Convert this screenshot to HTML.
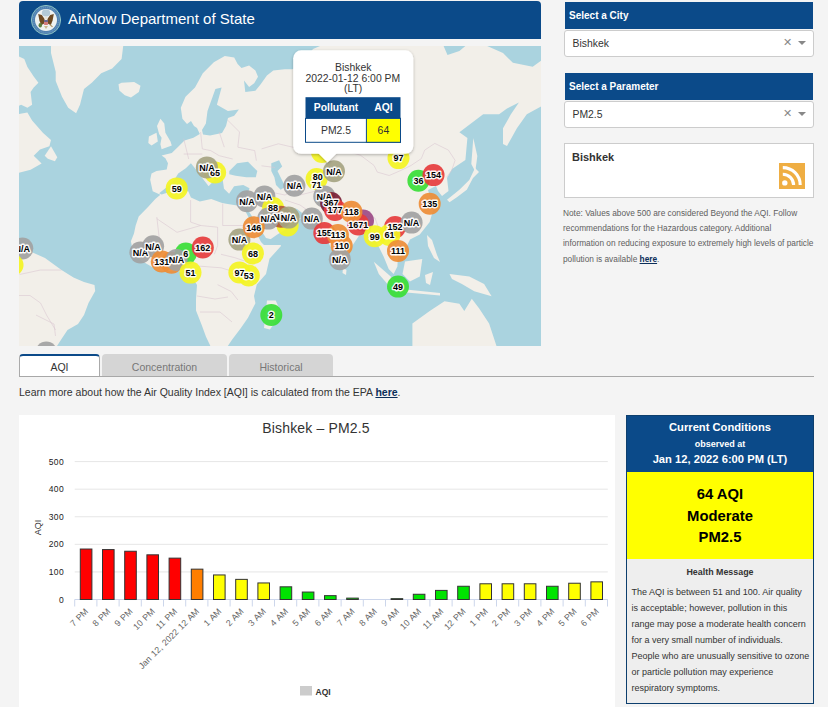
<!DOCTYPE html>
<html><head><meta charset="utf-8">
<style>
*{box-sizing:border-box;margin:0;padding:0}
html,body{width:828px;height:707px;overflow:hidden;background:#f4f4f4;font-family:"Liberation Sans",sans-serif;color:#333}
.abs{position:absolute}
#hdr{left:19px;top:1px;width:522px;height:38px;background:#0b4a89;border-radius:4px 4px 0 0}
#hdr .t{left:49px;top:9px;font-size:15px;color:#fff;white-space:nowrap}
#map{left:19px;top:46px;width:522px;height:300px;overflow:hidden;background:#aad3df}
.sh{left:565px;width:248px;height:27px;background:#0b4a89;color:#fff;font-weight:bold;font-size:10px;padding:8px 0 0 4px;white-space:nowrap}
.sel{left:564px;width:250px;height:27px;background:#fff;border:1px solid #ccc;border-radius:3px;font-size:10.4px;padding:7px 0 0 7.5px;color:#333}
.sel .x{position:absolute;left:218px;top:5px;font-size:11px;color:#888}
.sel .ar{position:absolute;left:233px;top:10px;width:0;height:0;border-left:4px solid transparent;border-right:4px solid transparent;border-top:4px solid #888}
#bx{left:564px;top:143px;width:250px;height:55px;background:#fff;border:1px solid #ccc}
#note{left:563px;top:205.5px;width:260px;font-size:8.3px;line-height:15.4px;color:#606060;white-space:nowrap}
.tab{top:354px;height:22px;border-radius:4px 4px 0 0;font-size:10.5px;text-align:center;padding-top:5px}
#chart{left:19px;top:415px;width:596px;height:292px;background:#fff}
#cc{left:626px;top:415px;width:188px;height:289px;background:#eeeeee}
</style></head><body>
<div id="hdr" class="abs">
  <svg class="abs" style="left:11px;top:3px" width="32" height="32" viewBox="0 0 32 32">
    <circle cx="16" cy="16" r="14.6" fill="#4d7fae" stroke="#8cc2c4" stroke-width="1"/>
    <circle cx="16" cy="16" r="12.6" fill="none" stroke="#6391be" stroke-width="1.6" stroke-dasharray="1.2 0.8"/>
    <circle cx="16" cy="16" r="11" fill="#eef2f1"/>
    <ellipse cx="16" cy="9" rx="4.2" ry="3.4" fill="#b3cad6"/>
    <path d="M8.2 10 L11.8 11 L14.6 15 L14.2 19.5 L11.2 21.2 L9.4 16.5Z" fill="#6e4a22"/>
    <path d="M23.8 10 L20.2 11 L17.4 15 L17.8 19.5 L20.8 21.2 L22.6 16.5Z" fill="#6e4a22"/>
    <circle cx="16" cy="14" r="1.6" fill="#e8e4d6"/>
    <rect x="14.1" y="16.2" width="3.8" height="4.8" rx="0.6" fill="#d4797a"/>
    <rect x="14.1" y="16.2" width="3.8" height="1.6" fill="#4d5f93"/>
    <ellipse cx="10.3" cy="21.2" rx="1.7" ry="2.3" fill="#5b8040"/>
    <path d="M20 20 L23 22.5 L22 23.2 L19.5 21Z" fill="#b49a6a"/>
    <path d="M14 22 L16 25 L18 22Z" fill="#cbb88e"/>
  </svg>
  <div class="abs t">AirNow Department of State</div>
</div>
<div id="map" class="abs">
<svg width="522" height="300" viewBox="19 46 522 300" style="position:absolute;left:0;top:0">
<rect x="19" y="46" width="522" height="300" fill="#aad3df"/>
<polygon points="18.0,56.0 24.3,59.1 27.4,67.0 33.7,76.4 38.4,82.7 33.7,87.4 30.6,92.1 32.1,104.7 27.4,107.8 21.1,104.7 18.0,106.2" fill="#f2efe9"/>
<polygon points="18.0,114.1 27.4,112.5 32.1,120.4 43.1,132.9 51.0,140.0 49.4,146.3 40.0,149.4 33.7,155.7 41.6,163.6 30.6,169.8 18.0,173.0" fill="#f2efe9"/>
<polygon points="44.7,155.7 51.0,146.3 57.3,157.3 54.9,161.2 47.8,158.8" fill="#f2efe9"/>
<polygon points="51.0,46.0 123.2,46.0 121.6,59.1 112.2,68.6 101.2,73.3 91.8,82.7 84.0,89.0 80.0,104.7 76.1,113.3 68.2,107.8 62.0,96.8 55.7,81.1 55.7,71.7 53.3,62.3 51.0,52.9" fill="#f2efe9"/>
<polygon points="118.5,84.3 121.6,82.7 134.2,81.9 140.5,85.8 138.9,92.1 131.0,97.6 124.8,95.2 119.3,90.5" fill="#f2efe9"/>
<polygon points="199.8,134.0 197.0,128.0 194.0,126.0 191.0,121.0 187.0,124.0 182.4,118.8 180.8,107.8 185.5,96.8 195.0,87.4 202.8,73.3 213.8,62.3 224.8,56.0 234.2,57.6 237.6,64.1 241.5,67.9 249.1,65.4 255.4,70.4 258.0,76.8 254.2,83.2 249.1,87.0 244.0,80.6 245.3,92.1 255.4,90.8 260.5,84.4 266.9,75.5 273.3,70.4 284.7,69.2 292.3,69.2 300.0,66.0 313.0,49.0 320.0,46.0 443.6,46.0 447.5,54.9 459.4,50.9 465.4,46.0 487.2,46.0 503.0,52.9 512.9,62.8 522.8,64.8 532.7,66.8 541.0,60.8 541.0,106.4 526.8,114.3 516.9,128.2 507.0,146.0 503.0,144.0 503.0,128.2 510.9,114.3 518.9,102.4 507.0,108.4 499.1,114.3 483.2,114.3 459.4,132.2 467.4,138.1 465.4,159.9 452.0,169.0 447.0,178.0 448.5,191.0 442.0,196.0 438.0,191.0 436.0,186.0 428.0,190.0 431.0,200.0 434.0,207.0 429.7,222.0 419.8,234.4 410.0,239.4 405.0,250.0 398.0,255.0 397.4,266.6 393.6,274.0 388.7,269.1 383.7,256.7 376.3,241.8 371.4,231.9 368.9,224.5 361.5,231.9 351.6,246.8 344.1,261.7 340.4,267.8 336.7,259.2 329.3,244.3 319.4,222.0 312.0,217.1 307.0,212.1 299.6,219.6 289.7,227.0 277.3,234.4 268.0,241.0 280.0,243.0 281.0,246.0 269.5,258.8 266.0,274.0 256.8,284.5 254.0,296.0 255.4,303.3 248.0,317.8 240.9,328.0 232.2,339.6 227.8,346.0 210.4,346.0 206.0,336.7 201.7,325.0 196.0,310.6 196.0,299.0 197.0,285.0 194.0,280.0 186.9,276.0 179.1,270.9 158.9,270.9 140.2,260.0 132.4,249.1 130.9,241.3 134.0,233.5 135.6,225.8 138.7,216.4 148.0,207.1 155.3,198.9 160.4,194.7 152.7,191.2 150.2,179.8 151.5,173.4 156.5,170.9 166.7,169.6 168.0,163.3 165.4,158.2 161.6,155.6 171.8,153.1 178.2,146.7 184.5,140.4 193.4,137.8" fill="#f2efe9"/>
<polygon points="160.4,118.8 164.3,123.5 165.4,132.7 170.5,141.6 171.8,145.4 161.6,149.3 160.4,144.2 161.6,137.8 159.1,134.0 157.0,126.0" fill="#f2efe9"/>
<polygon points="148.9,136.5 156.5,132.7 157.8,141.6 151.5,145.4 148.3,142.9" fill="#f2efe9"/>
<polygon points="201.1,191.2 208.7,191.2 206.2,196.3" fill="#f2efe9"/>
<polygon points="447.0,199.7 459.4,189.8 469.3,180.0 475.0,168.0 479.0,172.0 473.0,178.0 466.8,189.8 456.9,197.3 449.5,202.2" fill="#f2efe9"/>
<polygon points="473.3,138.1 477.3,155.9 475.3,171.8 471.3,163.9" fill="#f2efe9"/>
<polygon points="405.0,261.6 422.3,259.1 419.8,276.5 409.9,281.4 402.5,274.0" fill="#f2efe9"/>
<polygon points="373.8,261.7 393.6,279.0 401.1,291.3 393.6,291.3 378.8,274.0" fill="#f2efe9"/>
<polygon points="401.0,289.0 440.0,293.0 440.0,295.5 401.0,292.0" fill="#f2efe9"/>
<polygon points="449.5,274.0 469.3,276.5 484.1,283.9 491.6,296.3 474.2,291.3 461.9,283.9 452.0,278.9" fill="#f2efe9"/>
<polygon points="427.0,235.0 432.0,240.0 437.0,255.0 440.0,262.0 434.0,258.0 428.0,246.0" fill="#f2efe9"/>
<polygon points="425.0,275.0 433.0,272.0 430.0,285.0 426.0,283.0" fill="#f2efe9"/>
<polygon points="412.4,323.5 429.7,311.1 444.5,301.2 459.4,303.7 464.3,311.1 471.8,298.7 479.2,308.6 489.1,323.5 496.5,346.0 412.4,346.0" fill="#f2efe9"/>
<polygon points="267.0,300.4 275.7,300.4 281.4,313.5 269.9,329.4 264.0,328.0" fill="#f2efe9"/>
<polygon points="343.0,268.0 346.5,270.0 346.0,275.0 342.5,273.0" fill="#f2efe9"/>
<polygon points="18.0,244.0 31.5,252.0 45.0,258.0 61.5,270.0 73.5,277.5 84.0,282.0 94.5,285.0 95.2,291.0 88.5,303.0 84.0,315.0 78.0,324.0 67.5,330.0 61.5,339.0 57.0,346.0 18.0,346.0" fill="#f2efe9"/>
<polygon points="207.5,111.0 215.4,89.0 221.6,87.4 216.9,104.7 227.9,111.0 238.9,109.4 234.2,115.7 228.0,118.0 226.0,126.0 222.0,133.0 210.0,135.5 203.0,134.5 202.0,130.0 205.9,123.5" fill="#aad3df"/>
<polygon points="159.1,193.2 168.0,186.2 174.4,179.8 178.2,173.4 185.8,168.3 190.9,163.3 196.0,169.6 203.6,179.8 208.7,186.2 206.2,188.7 211.2,183.6 215.1,179.8 208.7,173.4 201.1,165.8 199.8,160.7 206.2,163.3 216.3,170.9 222.7,179.8 224.0,188.7 229.1,193.8 234.1,186.2 243.3,185.1 249.5,188.2 246.4,199.1 243.3,206.9 235.6,205.3 226.2,203.8 221.4,202.7 211.2,198.9 199.8,201.4 190.9,197.6 188.3,191.2 168.0,192.5 161.6,194.4" fill="#aad3df"/>
<polygon points="229.3,171.1 237.1,163.3 248.0,161.8 252.7,166.4 257.3,171.1 255.8,177.3 246.4,177.3 235.6,175.8 229.3,174.2" fill="#aad3df"/>
<polygon points="271.3,163.3 279.1,160.2 282.2,166.4 277.5,171.1 282.2,180.4 285.3,186.7 280.7,189.8 276.0,185.1 274.4,177.3 271.3,171.1" fill="#aad3df"/>
<polygon points="289.0,207.0 297.0,209.0 306.0,216.0 300.0,218.0 292.0,213.0" fill="#aad3df"/>
<polygon points="243.3,206.9 246.0,207.0 266.0,238.0 282.0,242.0 281.0,245.0 264.0,245.0 261.0,242.0" fill="#aad3df"/>
<polyline points="183.7,138.7 188.7,159.0" fill="none" stroke="#d9c4d0" stroke-width="0.55"/>
<polyline points="200.6,132.0 202.3,148.9" fill="none" stroke="#d9c4d0" stroke-width="0.55"/>
<polyline points="219.2,132.0 224.3,147.2" fill="none" stroke="#d9c4d0" stroke-width="0.55"/>
<polyline points="227.6,120.1 239.5,132.0 237.8,147.2 254.7,150.6 256.4,160.7" fill="none" stroke="#d9c4d0" stroke-width="0.55"/>
<polyline points="202.3,148.9 210.7,150.6 219.2,155.7 232.7,159.0" fill="none" stroke="#d9c4d0" stroke-width="0.55"/>
<polyline points="183.7,154.0 202.3,154.0" fill="none" stroke="#d9c4d0" stroke-width="0.55"/>
<polyline points="261.5,148.9 278.4,143.8 300.0,148.9 330.0,146.0 360.4,155.2" fill="none" stroke="#d9c4d0" stroke-width="0.55"/>
<polyline points="261.5,165.8 275.0,167.5" fill="none" stroke="#d9c4d0" stroke-width="0.55"/>
<polyline points="190.6,200.1 190.6,222.1 200.7,225.5" fill="none" stroke="#d9c4d0" stroke-width="0.55"/>
<polyline points="222.7,203.5 222.7,225.5 244.7,225.5" fill="none" stroke="#d9c4d0" stroke-width="0.55"/>
<polyline points="217.6,227.2 217.6,245.8 214.3,254.3" fill="none" stroke="#d9c4d0" stroke-width="0.55"/>
<polyline points="156.8,218.7 177.0,232.3 200.7,225.5 217.6,227.2" fill="none" stroke="#d9c4d0" stroke-width="0.55"/>
<polyline points="156.8,217.0 160.1,245.8" fill="none" stroke="#d9c4d0" stroke-width="0.55"/>
<polyline points="221.0,254.3 234.5,257.6 244.7,261.0" fill="none" stroke="#d9c4d0" stroke-width="0.55"/>
<polyline points="199.0,266.1 221.0,267.8 237.9,272.9" fill="none" stroke="#d9c4d0" stroke-width="0.55"/>
<polyline points="217.6,284.7 231.2,291.5 237.9,300.0" fill="none" stroke="#d9c4d0" stroke-width="0.55"/>
<polyline points="197.0,296.0 215.0,299.0 228.0,297.0" fill="none" stroke="#d9c4d0" stroke-width="0.55"/>
<polyline points="200.0,312.0 220.0,312.0 232.0,322.0" fill="none" stroke="#d9c4d0" stroke-width="0.55"/>
<polyline points="360.4,155.2 374.0,165.4 377.3,172.1 389.2,175.5 401.0,170.4 411.2,165.4 421.3,158.6 424.7,150.1 434.8,143.4 448.4,150.1 455.1,160.3 451.7,170.4 446.7,177.2" fill="none" stroke="#d9c4d0" stroke-width="0.55"/>
<polyline points="300.0,195.0 320.0,190.0 340.0,200.0 360.0,215.0 375.0,218.0" fill="none" stroke="#d9c4d0" stroke-width="0.55"/>
<polyline points="285.0,200.0 300.0,205.0 310.0,212.0" fill="none" stroke="#d9c4d0" stroke-width="0.55"/>
<polyline points="375.0,218.0 380.0,232.0 395.0,240.0" fill="none" stroke="#d9c4d0" stroke-width="0.55"/>
<polyline points="250.0,225.0 265.0,222.0 282.0,226.0" fill="none" stroke="#d9c4d0" stroke-width="0.55"/>
<polyline points="270.0,192.0 285.0,195.0 295.0,190.0" fill="none" stroke="#d9c4d0" stroke-width="0.55"/>
<polyline points="18.0,295.5 30.0,295.5 40.5,303.0 46.5,315.0 55.5,330.0" fill="none" stroke="#d9c4d0" stroke-width="0.55"/>
<polyline points="19.5,274.5 40.5,270.0 61.5,270.0" fill="none" stroke="#d9c4d0" stroke-width="0.55"/>
<polyline points="36.0,315.0 54.0,324.0 55.5,336.0" fill="none" stroke="#d9c4d0" stroke-width="0.55"/>
<g font-family="Liberation Sans" font-weight="bold" font-size="9" text-anchor="middle" stroke-linejoin="round">
<circle cx="22.3" cy="248.5" r="11" fill="#a2a2a2" fill-opacity="0.92"/>
<circle cx="12.5" cy="265" r="11" fill="#f4f422" fill-opacity="0.92"/>
<circle cx="46.3" cy="352.5" r="11" fill="#a2a2a2" fill-opacity="0.92"/>
<circle cx="176.7" cy="188.4" r="11" fill="#f4f422" fill-opacity="0.92"/>
<circle cx="215.1" cy="172.5" r="11" fill="#f4f422" fill-opacity="0.92"/>
<circle cx="206.9" cy="167.4" r="11" fill="#a6a482" fill-opacity="0.92"/>
<circle cx="140.4" cy="252.5" r="11" fill="#a2a2a2" fill-opacity="0.92"/>
<circle cx="153.1" cy="246.3" r="11" fill="#a2a2a2" fill-opacity="0.92"/>
<circle cx="171.5" cy="262.8" r="11" fill="#ee8d36" fill-opacity="0.92"/>
<circle cx="161.8" cy="261.4" r="11" fill="#ee8d36" fill-opacity="0.92"/>
<circle cx="185.8" cy="253.6" r="11" fill="#3ade36" fill-opacity="0.92"/>
<circle cx="176.6" cy="259.9" r="11" fill="#a2a2a2" fill-opacity="0.92"/>
<circle cx="202.8" cy="247.5" r="11" fill="#e63c3c" fill-opacity="0.92"/>
<circle cx="190.5" cy="272.6" r="11" fill="#f4f422" fill-opacity="0.92"/>
<circle cx="239.4" cy="239.6" r="11" fill="#a6a482" fill-opacity="0.92"/>
<circle cx="252.9" cy="253.4" r="11" fill="#f4f422" fill-opacity="0.92"/>
<circle cx="239.4" cy="272.4" r="11" fill="#f4f422" fill-opacity="0.92"/>
<circle cx="248.8" cy="275.5" r="11" fill="#f4f422" fill-opacity="0.92"/>
<circle cx="271.3" cy="315" r="11" fill="#3ade36" fill-opacity="0.92"/>
<circle cx="247" cy="201.2" r="11" fill="#a2a2a2" fill-opacity="0.92"/>
<circle cx="264.4" cy="196.4" r="11" fill="#a2a2a2" fill-opacity="0.92"/>
<circle cx="273.1" cy="208" r="11" fill="#f4f422" fill-opacity="0.92"/>
<circle cx="287.6" cy="225.4" r="11" fill="#f4f422" fill-opacity="0.92"/>
<circle cx="280.9" cy="216.7" r="11" fill="#b0583e" fill-opacity="0.92"/>
<circle cx="268.3" cy="218.6" r="11" fill="#a2a2a2" fill-opacity="0.92"/>
<circle cx="288.6" cy="217.6" r="11" fill="#a6a482" fill-opacity="0.92"/>
<circle cx="253.8" cy="227.3" r="11" fill="#ee8d36" fill-opacity="0.92"/>
<circle cx="294.4" cy="185.7" r="11" fill="#a2a2a2" fill-opacity="0.92"/>
<circle cx="322" cy="152" r="11" fill="#f4f422" fill-opacity="0.92"/>
<circle cx="316.6" cy="179.1" r="11" fill="#f4f422" fill-opacity="0.92"/>
<circle cx="334" cy="171.3" r="11" fill="#a6a482" fill-opacity="0.92"/>
<circle cx="324.3" cy="196.4" r="11" fill="#a2a2a2" fill-opacity="0.92"/>
<circle cx="331.1" cy="203.1" r="11" fill="#7a2036" fill-opacity="0.92"/>
<circle cx="335" cy="209.9" r="11" fill="#e63c3c" fill-opacity="0.92"/>
<circle cx="311.8" cy="218.6" r="11" fill="#a2a2a2" fill-opacity="0.92"/>
<circle cx="363" cy="220.5" r="11" fill="#9c4a86" fill-opacity="0.92"/>
<circle cx="358.2" cy="224.4" r="11" fill="#e63c3c" fill-opacity="0.92"/>
<circle cx="351.4" cy="211.8" r="11" fill="#ee8d36" fill-opacity="0.92"/>
<circle cx="324.3" cy="233.1" r="11" fill="#e63c3c" fill-opacity="0.92"/>
<circle cx="337.9" cy="235" r="11" fill="#ee8d36" fill-opacity="0.92"/>
<circle cx="341.7" cy="245.7" r="11" fill="#ee8d36" fill-opacity="0.92"/>
<circle cx="339.8" cy="259.2" r="11" fill="#a2a2a2" fill-opacity="0.92"/>
<circle cx="398.5" cy="158.1" r="11" fill="#f4f422" fill-opacity="0.92"/>
<circle cx="418.4" cy="180.7" r="11" fill="#3ade36" fill-opacity="0.92"/>
<circle cx="433.5" cy="175.1" r="11" fill="#e63c3c" fill-opacity="0.92"/>
<circle cx="429.7" cy="203.8" r="11" fill="#ee8d36" fill-opacity="0.92"/>
<circle cx="395.1" cy="227.1" r="11" fill="#e63c3c" fill-opacity="0.92"/>
<circle cx="411.6" cy="222.6" r="11" fill="#a2a2a2" fill-opacity="0.92"/>
<circle cx="374.7" cy="236.2" r="11" fill="#f4f422" fill-opacity="0.92"/>
<circle cx="389.4" cy="235" r="11" fill="#f4f422" fill-opacity="0.92"/>
<circle cx="398" cy="250.9" r="11" fill="#ee8d36" fill-opacity="0.92"/>
<circle cx="398" cy="286.6" r="11" fill="#3ade36" fill-opacity="0.92"/>
<text x="22.3" y="251.8" stroke="#fff" stroke-opacity="0.95" stroke-width="2.8" fill="#000" paint-order="stroke">N/A</text>
<text x="176.7" y="191.7" stroke="#fff" stroke-opacity="0.95" stroke-width="2.8" fill="#000" paint-order="stroke">59</text>
<text x="215.1" y="175.8" stroke="#fff" stroke-opacity="0.95" stroke-width="2.8" fill="#000" paint-order="stroke">65</text>
<text x="206.9" y="170.7" stroke="#fff" stroke-opacity="0.95" stroke-width="2.8" fill="#000" paint-order="stroke">N/A</text>
<text x="140.4" y="255.8" stroke="#fff" stroke-opacity="0.95" stroke-width="2.8" fill="#000" paint-order="stroke">N/A</text>
<text x="153.1" y="249.6" stroke="#fff" stroke-opacity="0.95" stroke-width="2.8" fill="#000" paint-order="stroke">N/A</text>
<text x="161.8" y="264.7" stroke="#fff" stroke-opacity="0.95" stroke-width="2.8" fill="#000" paint-order="stroke">131</text>
<text x="185.8" y="256.9" stroke="#fff" stroke-opacity="0.95" stroke-width="2.8" fill="#000" paint-order="stroke">6</text>
<text x="176.6" y="263.2" stroke="#fff" stroke-opacity="0.95" stroke-width="2.8" fill="#000" paint-order="stroke">N/A</text>
<text x="202.8" y="250.8" stroke="#fff" stroke-opacity="0.95" stroke-width="2.8" fill="#000" paint-order="stroke">162</text>
<text x="190.5" y="275.9" stroke="#fff" stroke-opacity="0.95" stroke-width="2.8" fill="#000" paint-order="stroke">51</text>
<text x="239.4" y="242.9" stroke="#fff" stroke-opacity="0.95" stroke-width="2.8" fill="#000" paint-order="stroke">N/A</text>
<text x="252.9" y="256.7" stroke="#fff" stroke-opacity="0.95" stroke-width="2.8" fill="#000" paint-order="stroke">68</text>
<text x="239.4" y="275.7" stroke="#fff" stroke-opacity="0.95" stroke-width="2.8" fill="#000" paint-order="stroke">97</text>
<text x="248.8" y="278.8" stroke="#fff" stroke-opacity="0.95" stroke-width="2.8" fill="#000" paint-order="stroke">53</text>
<text x="271.3" y="318.3" stroke="#fff" stroke-opacity="0.95" stroke-width="2.8" fill="#000" paint-order="stroke">2</text>
<text x="247" y="204.5" stroke="#fff" stroke-opacity="0.95" stroke-width="2.8" fill="#000" paint-order="stroke">N/A</text>
<text x="264.4" y="199.7" stroke="#fff" stroke-opacity="0.95" stroke-width="2.8" fill="#000" paint-order="stroke">N/A</text>
<text x="273.1" y="211.3" stroke="#fff" stroke-opacity="0.95" stroke-width="2.8" fill="#000" paint-order="stroke">88</text>
<text x="280.9" y="220.0" stroke="#fff" stroke-opacity="0.95" stroke-width="2.8" fill="#000" paint-order="stroke">N/A</text>
<text x="268.3" y="221.9" stroke="#fff" stroke-opacity="0.95" stroke-width="2.8" fill="#000" paint-order="stroke">N/A</text>
<text x="288.6" y="220.9" stroke="#fff" stroke-opacity="0.95" stroke-width="2.8" fill="#000" paint-order="stroke">N/A</text>
<text x="253.8" y="230.6" stroke="#fff" stroke-opacity="0.95" stroke-width="2.8" fill="#000" paint-order="stroke">146</text>
<text x="294.4" y="189.0" stroke="#fff" stroke-opacity="0.95" stroke-width="2.8" fill="#000" paint-order="stroke">N/A</text>
<text x="334" y="174.6" stroke="#fff" stroke-opacity="0.95" stroke-width="2.8" fill="#000" paint-order="stroke">N/A</text>
<text x="324.3" y="199.7" stroke="#fff" stroke-opacity="0.95" stroke-width="2.8" fill="#000" paint-order="stroke">N/A</text>
<text x="331.1" y="206.4" stroke="#fff" stroke-opacity="0.95" stroke-width="2.8" fill="#000" paint-order="stroke">367</text>
<text x="335" y="213.2" stroke="#fff" stroke-opacity="0.95" stroke-width="2.8" fill="#000" paint-order="stroke">177</text>
<text x="311.8" y="221.9" stroke="#fff" stroke-opacity="0.95" stroke-width="2.8" fill="#000" paint-order="stroke">N/A</text>
<text x="358.2" y="227.7" stroke="#fff" stroke-opacity="0.95" stroke-width="2.8" fill="#000" paint-order="stroke">1671</text>
<text x="351.4" y="215.1" stroke="#fff" stroke-opacity="0.95" stroke-width="2.8" fill="#000" paint-order="stroke">118</text>
<text x="324.3" y="236.4" stroke="#fff" stroke-opacity="0.95" stroke-width="2.8" fill="#000" paint-order="stroke">155</text>
<text x="337.9" y="238.3" stroke="#fff" stroke-opacity="0.95" stroke-width="2.8" fill="#000" paint-order="stroke">113</text>
<text x="341.7" y="249.0" stroke="#fff" stroke-opacity="0.95" stroke-width="2.8" fill="#000" paint-order="stroke">110</text>
<text x="339.8" y="262.5" stroke="#fff" stroke-opacity="0.95" stroke-width="2.8" fill="#000" paint-order="stroke">N/A</text>
<text x="398.5" y="161.4" stroke="#fff" stroke-opacity="0.95" stroke-width="2.8" fill="#000" paint-order="stroke">97</text>
<text x="418.4" y="184.0" stroke="#fff" stroke-opacity="0.95" stroke-width="2.8" fill="#000" paint-order="stroke">36</text>
<text x="433.5" y="178.4" stroke="#fff" stroke-opacity="0.95" stroke-width="2.8" fill="#000" paint-order="stroke">154</text>
<text x="429.7" y="207.1" stroke="#fff" stroke-opacity="0.95" stroke-width="2.8" fill="#000" paint-order="stroke">135</text>
<text x="395.1" y="230.4" stroke="#fff" stroke-opacity="0.95" stroke-width="2.8" fill="#000" paint-order="stroke">152</text>
<text x="411.6" y="225.9" stroke="#fff" stroke-opacity="0.95" stroke-width="2.8" fill="#000" paint-order="stroke">N/A</text>
<text x="374.7" y="239.5" stroke="#fff" stroke-opacity="0.95" stroke-width="2.8" fill="#000" paint-order="stroke">99</text>
<text x="389.4" y="238.3" stroke="#fff" stroke-opacity="0.95" stroke-width="2.8" fill="#000" paint-order="stroke">61</text>
<text x="398" y="254.2" stroke="#fff" stroke-opacity="0.95" stroke-width="2.8" fill="#000" paint-order="stroke">111</text>
<text x="398" y="289.9" stroke="#fff" stroke-opacity="0.95" stroke-width="2.8" fill="#000" paint-order="stroke">49</text>
<text x="317.8" y="180.2" stroke="#fff" stroke-opacity="0.95" stroke-width="2.8" fill="#000" paint-order="stroke">80</text>
<text x="316.6" y="188.4" stroke="#fff" stroke-opacity="0.95" stroke-width="2.8" fill="#000" paint-order="stroke">71</text>
</g>
</svg>
<svg width="522" height="300" viewBox="19 46 522 300" style="position:absolute;left:0;top:0" font-family="Liberation Sans">
<defs><filter id="sh" x="-20%" y="-20%" width="140%" height="140%"><feDropShadow dx="0" dy="1" stdDeviation="1.5" flood-color="#000" flood-opacity="0.3"/></filter></defs>
<g filter="url(#sh)"><rect x="293.2" y="50.3" width="120.1" height="103.5" rx="8" fill="#fff"/><polygon points="318,153 337,153 327.5,162.5" fill="#fff"/></g>
<g font-size="10.4" fill="#333" text-anchor="middle">
<text x="353.2" y="71">Bishkek</text><text x="352.8" y="81.8">2022-01-12 6:00 PM</text><text x="353.2" y="92.4">(LT)</text>
</g>
<rect x="305.5" y="97.2" width="95" height="21.2" fill="#0b4a89"/>
<rect x="305.5" y="118.4" width="95" height="23.9" fill="#fff" stroke="#0b4a89" stroke-width="1"/>
<rect x="366.4" y="118.4" width="34.1" height="23.9" fill="#ffff00" stroke="#0b4a89" stroke-width="1"/>
<g font-size="10.4" text-anchor="middle"><text x="336" y="110.8" fill="#fff" font-weight="bold">Pollutant</text><text x="383.4" y="110.8" fill="#fff" font-weight="bold">AQI</text>
<text x="336" y="133.8" fill="#333">PM2.5</text><text x="383.4" y="133.8" fill="#333">64</text></g>
</svg>
</div>

<div class="abs sh" style="top:2px">Select a City</div>
<div class="abs sel" style="top:30px">Bishkek<span class="x">✕</span><span class="ar"></span></div>
<div class="abs sh" style="top:73px">Select a Parameter</div>
<div class="abs sel" style="top:101px">PM2.5<span class="x">✕</span><span class="ar"></span></div>
<div id="bx" class="abs"><div class="abs" style="left:7px;top:7px;font-size:11px;font-weight:bold;color:#333">Bishkek</div>
  <svg class="abs" style="left:214px;top:19px" width="26" height="26" viewBox="0 0 26 26"><rect width="26" height="26" fill="#efae43"/><circle cx="5.8" cy="19.9" r="2.7" fill="#fff"/><path d="M3.8 11.2 A10.8 10.8 0 0 1 14.6 22" stroke="#fff" stroke-width="3.1" fill="none"/><path d="M3.8 4.6 A17.4 17.4 0 0 1 21.2 22" stroke="#fff" stroke-width="3.1" fill="none"/></svg>

</div>
<div id="note" class="abs">Note: Values above 500 are considered Beyond the AQI. Follow<br>recommendations for the Hazardous category. Additional<br>information on reducing exposure to extremely high levels of particle<br>pollution is available <b style="color:#0b2e5a;text-decoration:underline">here</b>.</div>

<div class="abs tab" style="left:19px;width:81px;background:#fff;border:1px solid #aaa;border-top:2px solid #0b4a89;border-bottom:none;color:#333">AQI</div>
<div class="abs tab" style="left:102px;width:125px;background:#d5d5d5;color:#777;padding-top:7px">Concentration</div>
<div class="abs tab" style="left:229px;width:104px;background:#d5d5d5;color:#777;padding-top:7px">Historical</div>
<div class="abs" style="left:19px;top:376px;width:795px;height:1px;background:#a8a8a8"></div>
<div class="abs" style="left:19px;top:386px;font-size:10.5px;color:#333;white-space:nowrap">Learn more about how the Air Quality Index [AQI] is calculated from the EPA <b style="color:#0b2e5a;text-decoration:underline">here</b>.</div>

<div id="chart" class="abs">
<svg width="596" height="292" viewBox="19 415 596 292" style="position:absolute;left:0;top:0" font-family="Liberation Sans">
<rect x="19" y="415" width="596" height="292" fill="#fff"/>
<text x="316" y="433" font-size="14" letter-spacing="0.15" fill="#333" text-anchor="middle">Bishkek – PM2.5</text>
<rect x="74.7" y="461.10" width="533.10" height="1" fill="#e6e6e6"/>
<text x="64.2" y="464.60" font-size="8.5" letter-spacing="0.45" fill="#222" text-anchor="end">500</text>
<rect x="74.7" y="488.68" width="533.10" height="1" fill="#e6e6e6"/>
<text x="64.2" y="492.18" font-size="8.5" letter-spacing="0.45" fill="#222" text-anchor="end">400</text>
<rect x="74.7" y="516.26" width="533.10" height="1" fill="#e6e6e6"/>
<text x="64.2" y="519.76" font-size="8.5" letter-spacing="0.45" fill="#222" text-anchor="end">300</text>
<rect x="74.7" y="543.84" width="533.10" height="1" fill="#e6e6e6"/>
<text x="64.2" y="547.34" font-size="8.5" letter-spacing="0.45" fill="#222" text-anchor="end">200</text>
<rect x="74.7" y="571.42" width="533.10" height="1" fill="#e6e6e6"/>
<text x="64.2" y="574.92" font-size="8.5" letter-spacing="0.45" fill="#222" text-anchor="end">100</text>
<text x="64.2" y="602.50" font-size="8.5" letter-spacing="0.45" fill="#222" text-anchor="end">0</text>
<text transform="translate(41.3,527.5) rotate(-90)" font-size="9" fill="#333" text-anchor="middle">AQI</text>
<rect x="74.7" y="599.0" width="533.10" height="1" fill="#ccd6eb"/>
<rect x="74.20" y="599.5" width="1" height="7" fill="#ccd6eb"/>
<rect x="96.40" y="599.5" width="1" height="7" fill="#ccd6eb"/>
<rect x="118.60" y="599.5" width="1" height="7" fill="#ccd6eb"/>
<rect x="140.80" y="599.5" width="1" height="7" fill="#ccd6eb"/>
<rect x="163.00" y="599.5" width="1" height="7" fill="#ccd6eb"/>
<rect x="185.20" y="599.5" width="1" height="7" fill="#ccd6eb"/>
<rect x="207.40" y="599.5" width="1" height="7" fill="#ccd6eb"/>
<rect x="229.60" y="599.5" width="1" height="7" fill="#ccd6eb"/>
<rect x="251.80" y="599.5" width="1" height="7" fill="#ccd6eb"/>
<rect x="274.00" y="599.5" width="1" height="7" fill="#ccd6eb"/>
<rect x="296.20" y="599.5" width="1" height="7" fill="#ccd6eb"/>
<rect x="318.40" y="599.5" width="1" height="7" fill="#ccd6eb"/>
<rect x="340.60" y="599.5" width="1" height="7" fill="#ccd6eb"/>
<rect x="362.80" y="599.5" width="1" height="7" fill="#ccd6eb"/>
<rect x="385.00" y="599.5" width="1" height="7" fill="#ccd6eb"/>
<rect x="407.20" y="599.5" width="1" height="7" fill="#ccd6eb"/>
<rect x="429.40" y="599.5" width="1" height="7" fill="#ccd6eb"/>
<rect x="451.60" y="599.5" width="1" height="7" fill="#ccd6eb"/>
<rect x="473.80" y="599.5" width="1" height="7" fill="#ccd6eb"/>
<rect x="496.00" y="599.5" width="1" height="7" fill="#ccd6eb"/>
<rect x="518.20" y="599.5" width="1" height="7" fill="#ccd6eb"/>
<rect x="540.40" y="599.5" width="1" height="7" fill="#ccd6eb"/>
<rect x="562.60" y="599.5" width="1" height="7" fill="#ccd6eb"/>
<rect x="584.80" y="599.5" width="1" height="7" fill="#ccd6eb"/>
<rect x="607.00" y="599.5" width="1" height="7" fill="#ccd6eb"/>
<rect x="80.30" y="549.03" width="11.6" height="50.47" fill="#ff0000" stroke="#333" stroke-width="1"/>
<rect x="102.50" y="549.58" width="11.6" height="49.92" fill="#ff0000" stroke="#333" stroke-width="1"/>
<rect x="124.70" y="551.24" width="11.6" height="48.27" fill="#ff0000" stroke="#333" stroke-width="1"/>
<rect x="146.90" y="554.82" width="11.6" height="44.68" fill="#ff0000" stroke="#333" stroke-width="1"/>
<rect x="169.10" y="558.13" width="11.6" height="41.37" fill="#ff0000" stroke="#333" stroke-width="1"/>
<rect x="191.30" y="569.16" width="11.6" height="30.34" fill="#ff7e00" stroke="#333" stroke-width="1"/>
<rect x="213.50" y="574.95" width="11.6" height="24.55" fill="#ffff00" stroke="#333" stroke-width="1"/>
<rect x="235.70" y="579.37" width="11.6" height="20.13" fill="#ffff00" stroke="#333" stroke-width="1"/>
<rect x="257.90" y="582.95" width="11.6" height="16.55" fill="#ffff00" stroke="#333" stroke-width="1"/>
<rect x="280.10" y="586.81" width="11.6" height="12.69" fill="#00e400" stroke="#333" stroke-width="1"/>
<rect x="302.30" y="592.05" width="11.6" height="7.45" fill="#00e400" stroke="#333" stroke-width="1"/>
<rect x="324.50" y="595.64" width="11.6" height="3.86" fill="#00e400" stroke="#333" stroke-width="1"/>
<rect x="346.70" y="598.12" width="11.6" height="1.38" fill="#00e400" stroke="#333" stroke-width="1"/>
<rect x="391.10" y="598.67" width="11.6" height="0.83" fill="#00e400" stroke="#333" stroke-width="1"/>
<rect x="413.30" y="594.26" width="11.6" height="5.24" fill="#00e400" stroke="#333" stroke-width="1"/>
<rect x="435.50" y="590.40" width="11.6" height="9.10" fill="#00e400" stroke="#333" stroke-width="1"/>
<rect x="457.70" y="586.26" width="11.6" height="13.24" fill="#00e400" stroke="#333" stroke-width="1"/>
<rect x="479.90" y="583.78" width="11.6" height="15.72" fill="#ffff00" stroke="#333" stroke-width="1"/>
<rect x="502.10" y="583.78" width="11.6" height="15.72" fill="#ffff00" stroke="#333" stroke-width="1"/>
<rect x="524.30" y="583.78" width="11.6" height="15.72" fill="#ffff00" stroke="#333" stroke-width="1"/>
<rect x="546.50" y="586.26" width="11.6" height="13.24" fill="#00e400" stroke="#333" stroke-width="1"/>
<rect x="568.70" y="583.23" width="11.6" height="16.27" fill="#ffff00" stroke="#333" stroke-width="1"/>
<rect x="590.90" y="581.85" width="11.6" height="17.65" fill="#ffff00" stroke="#333" stroke-width="1"/>
<text transform="translate(88.80,612) rotate(-45)" font-size="8.8" word-spacing="0.8" fill="#666" text-anchor="end">7 PM</text>
<text transform="translate(111.00,612) rotate(-45)" font-size="8.8" word-spacing="0.8" fill="#666" text-anchor="end">8 PM</text>
<text transform="translate(133.20,612) rotate(-45)" font-size="8.8" word-spacing="0.8" fill="#666" text-anchor="end">9 PM</text>
<text transform="translate(155.40,612) rotate(-45)" font-size="8.8" word-spacing="0.8" fill="#666" text-anchor="end">10 PM</text>
<text transform="translate(177.60,612) rotate(-45)" font-size="8.8" word-spacing="0.8" fill="#666" text-anchor="end">11 PM</text>
<text transform="translate(199.80,612) rotate(-45)" font-size="8.8" word-spacing="0.8" fill="#666" text-anchor="end">Jan 12, 2022 12 AM</text>
<text transform="translate(222.00,612) rotate(-45)" font-size="8.8" word-spacing="0.8" fill="#666" text-anchor="end">1 AM</text>
<text transform="translate(244.20,612) rotate(-45)" font-size="8.8" word-spacing="0.8" fill="#666" text-anchor="end">2 AM</text>
<text transform="translate(266.40,612) rotate(-45)" font-size="8.8" word-spacing="0.8" fill="#666" text-anchor="end">3 AM</text>
<text transform="translate(288.60,612) rotate(-45)" font-size="8.8" word-spacing="0.8" fill="#666" text-anchor="end">4 AM</text>
<text transform="translate(310.80,612) rotate(-45)" font-size="8.8" word-spacing="0.8" fill="#666" text-anchor="end">5 AM</text>
<text transform="translate(333.00,612) rotate(-45)" font-size="8.8" word-spacing="0.8" fill="#666" text-anchor="end">6 AM</text>
<text transform="translate(355.20,612) rotate(-45)" font-size="8.8" word-spacing="0.8" fill="#666" text-anchor="end">7 AM</text>
<text transform="translate(377.40,612) rotate(-45)" font-size="8.8" word-spacing="0.8" fill="#666" text-anchor="end">8 AM</text>
<text transform="translate(399.60,612) rotate(-45)" font-size="8.8" word-spacing="0.8" fill="#666" text-anchor="end">9 AM</text>
<text transform="translate(421.80,612) rotate(-45)" font-size="8.8" word-spacing="0.8" fill="#666" text-anchor="end">10 AM</text>
<text transform="translate(444.00,612) rotate(-45)" font-size="8.8" word-spacing="0.8" fill="#666" text-anchor="end">11 AM</text>
<text transform="translate(466.20,612) rotate(-45)" font-size="8.8" word-spacing="0.8" fill="#666" text-anchor="end">12 PM</text>
<text transform="translate(488.40,612) rotate(-45)" font-size="8.8" word-spacing="0.8" fill="#666" text-anchor="end">1 PM</text>
<text transform="translate(510.60,612) rotate(-45)" font-size="8.8" word-spacing="0.8" fill="#666" text-anchor="end">2 PM</text>
<text transform="translate(532.80,612) rotate(-45)" font-size="8.8" word-spacing="0.8" fill="#666" text-anchor="end">3 PM</text>
<text transform="translate(555.00,612) rotate(-45)" font-size="8.8" word-spacing="0.8" fill="#666" text-anchor="end">4 PM</text>
<text transform="translate(577.20,612) rotate(-45)" font-size="8.8" word-spacing="0.8" fill="#666" text-anchor="end">5 PM</text>
<text transform="translate(599.40,612) rotate(-45)" font-size="8.8" word-spacing="0.8" fill="#666" text-anchor="end">6 PM</text>
<rect x="300" y="686" width="12" height="9.5" fill="#ccc"/>
<text x="315.5" y="694.6" font-size="8.5" font-weight="bold" fill="#333">AQI</text>
</svg>
</div>
<div id="cc" class="abs">
<svg width="188" height="289" viewBox="626 415 188 289" style="position:absolute;left:0;top:0" font-family="Liberation Sans" font-weight="bold" text-anchor="middle">
<rect x="626" y="415" width="188" height="57" fill="#0b4a89"/>
<rect x="626" y="472" width="188" height="87" fill="#ffff00"/>
<text x="720" y="431" font-size="11.2" fill="#fff">Current Conditions</text>
<text x="720" y="447" font-size="9" fill="#fff">observed at</text>
<text x="720" y="463" font-size="11.2" fill="#fff">Jan 12, 2022 6:00 PM (LT)</text>
<text x="720" y="499.4" font-size="14.8" fill="#000">64 AQI</text>
<text x="720" y="520.6" font-size="14.8" fill="#000">Moderate</text>
<text x="720" y="541.6" font-size="14.8" fill="#000">PM2.5</text>
<text x="720" y="574.8" font-size="8.9" fill="#333">Health Message</text>
<g font-weight="normal" font-size="9" fill="#333" text-anchor="start">
<text x="631.6" y="594.9">The AQI is between 51 and 100. Air quality</text>
<text x="631.6" y="611">is acceptable; however, pollution in this</text>
<text x="631.6" y="627">range may pose a moderate health concern</text>
<text x="631.6" y="643.1">for a very small number of individuals.</text>
<text x="631.6" y="659">People who are unusually sensitive to ozone</text>
<text x="631.6" y="675">or particle pollution may experience</text>
<text x="631.6" y="691">respiratory symptoms.</text>
</g>
<rect x="626.5" y="415.5" width="187" height="288" fill="none" stroke="#0d3f6e" stroke-width="1"/>
</svg>
</div>
</body></html>
